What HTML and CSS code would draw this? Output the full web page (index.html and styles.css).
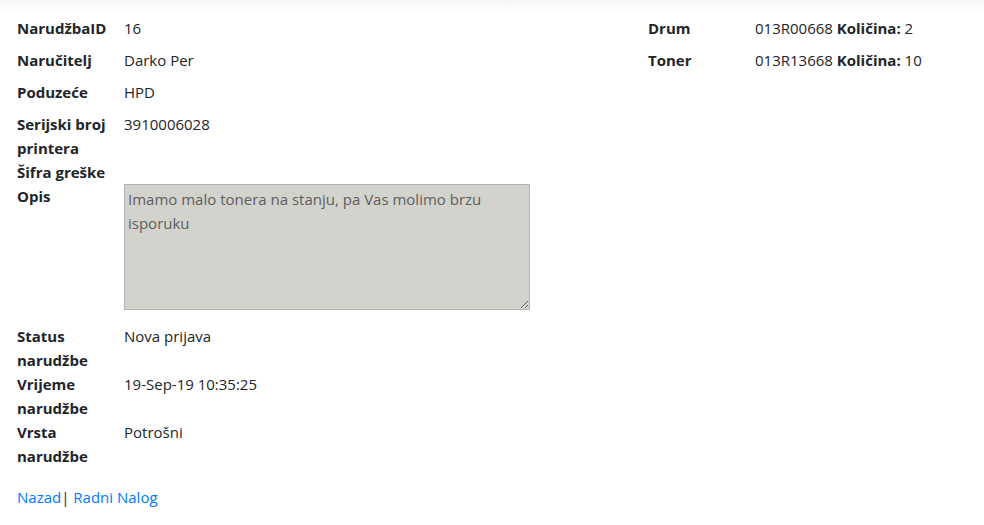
FILE: index.html
```html
<!DOCTYPE html>
<html lang="hr">
<head>
<meta charset="utf-8">
<title>Narudžba</title>
<link rel="stylesheet" href="styles.css">
</head>
<body>
<div class="topshade"></div>
<main class="page">
  <div class="cols">
    <dl class="details">
      <dt>NarudžbaID</dt><dd>16</dd>
      <dt>Naručitelj</dt><dd>Darko Per</dd>
      <dt>Poduzeće</dt><dd>HPD</dd>
      <dt>Serijski broj printera</dt><dd>3910006028</dd>
      <dt>Šifra greške</dt><dd></dd>
      <dt>Opis</dt><dd><textarea class="opis" readonly>Imamo malo tonera na stanju, pa Vas molimo brzu isporuku</textarea></dd>
      <dt>Status narudžbe</dt><dd>Nova prijava</dd>
      <dt>Vrijeme narudžbe</dt><dd>19-Sep-19 10:35:25</dd>
      <dt>Vrsta narudžbe</dt><dd>Potrošni</dd>
    </dl>
    <dl class="details">
      <dt>Drum</dt><dd>013R00668 <b>Količina:</b> 2</dd>
      <dt>Toner</dt><dd>013R13668 <b>Količina:</b> 10</dd>
    </dl>
  </div>
  <p class="links"><a href="#">Nazad</a>| <a href="#">Radni Nalog</a></p>
</main>
</body>
</html>
```
FILE: styles.css
```css
html, body {
  margin: 0;
  padding: 0;
  background: #fff;
}
body {
  font-family: "Segoe UI", "Open Sans", "Noto Sans", sans-serif;
  font-size: 15px;
  line-height: 24px;
  color: #212529;
}
.topshade {
  height: 12px;
  background: linear-gradient(#f6f6f6, #ffffff);
}
.page {
  padding: 4px 15px 0 17px;
}
.cols {
  display: grid;
  grid-template-columns: 631px 1fr;
  align-items: start;
}
.details {
  display: grid;
  grid-template-columns: 107px 1fr;
  align-items: start;
  align-content: start;
  margin: 0;
}
.details dt {
  font-weight: 700;
  margin: 0;
  padding-right: 12px;
}
.details dd {
  margin: 0 0 8px 0;
}
.details b {
  font-weight: 700;
}
.opis {
  display: block;
  box-sizing: border-box;
  width: 406px;
  height: 126px;
  margin: 0 0 6px 0;
  padding: 2px 2px 2px 3px;
  border: 1px solid #b3b3b3;
  background: #d3d3cd;
  color: #5e5e5e;
  font-family: inherit;
  font-size: 15px;
  line-height: 24px;
  resize: both;
}
.links {
  margin: 17px 0 0 0;
}
.links a {
  color: #007bff;
  text-decoration: none;
}
```
